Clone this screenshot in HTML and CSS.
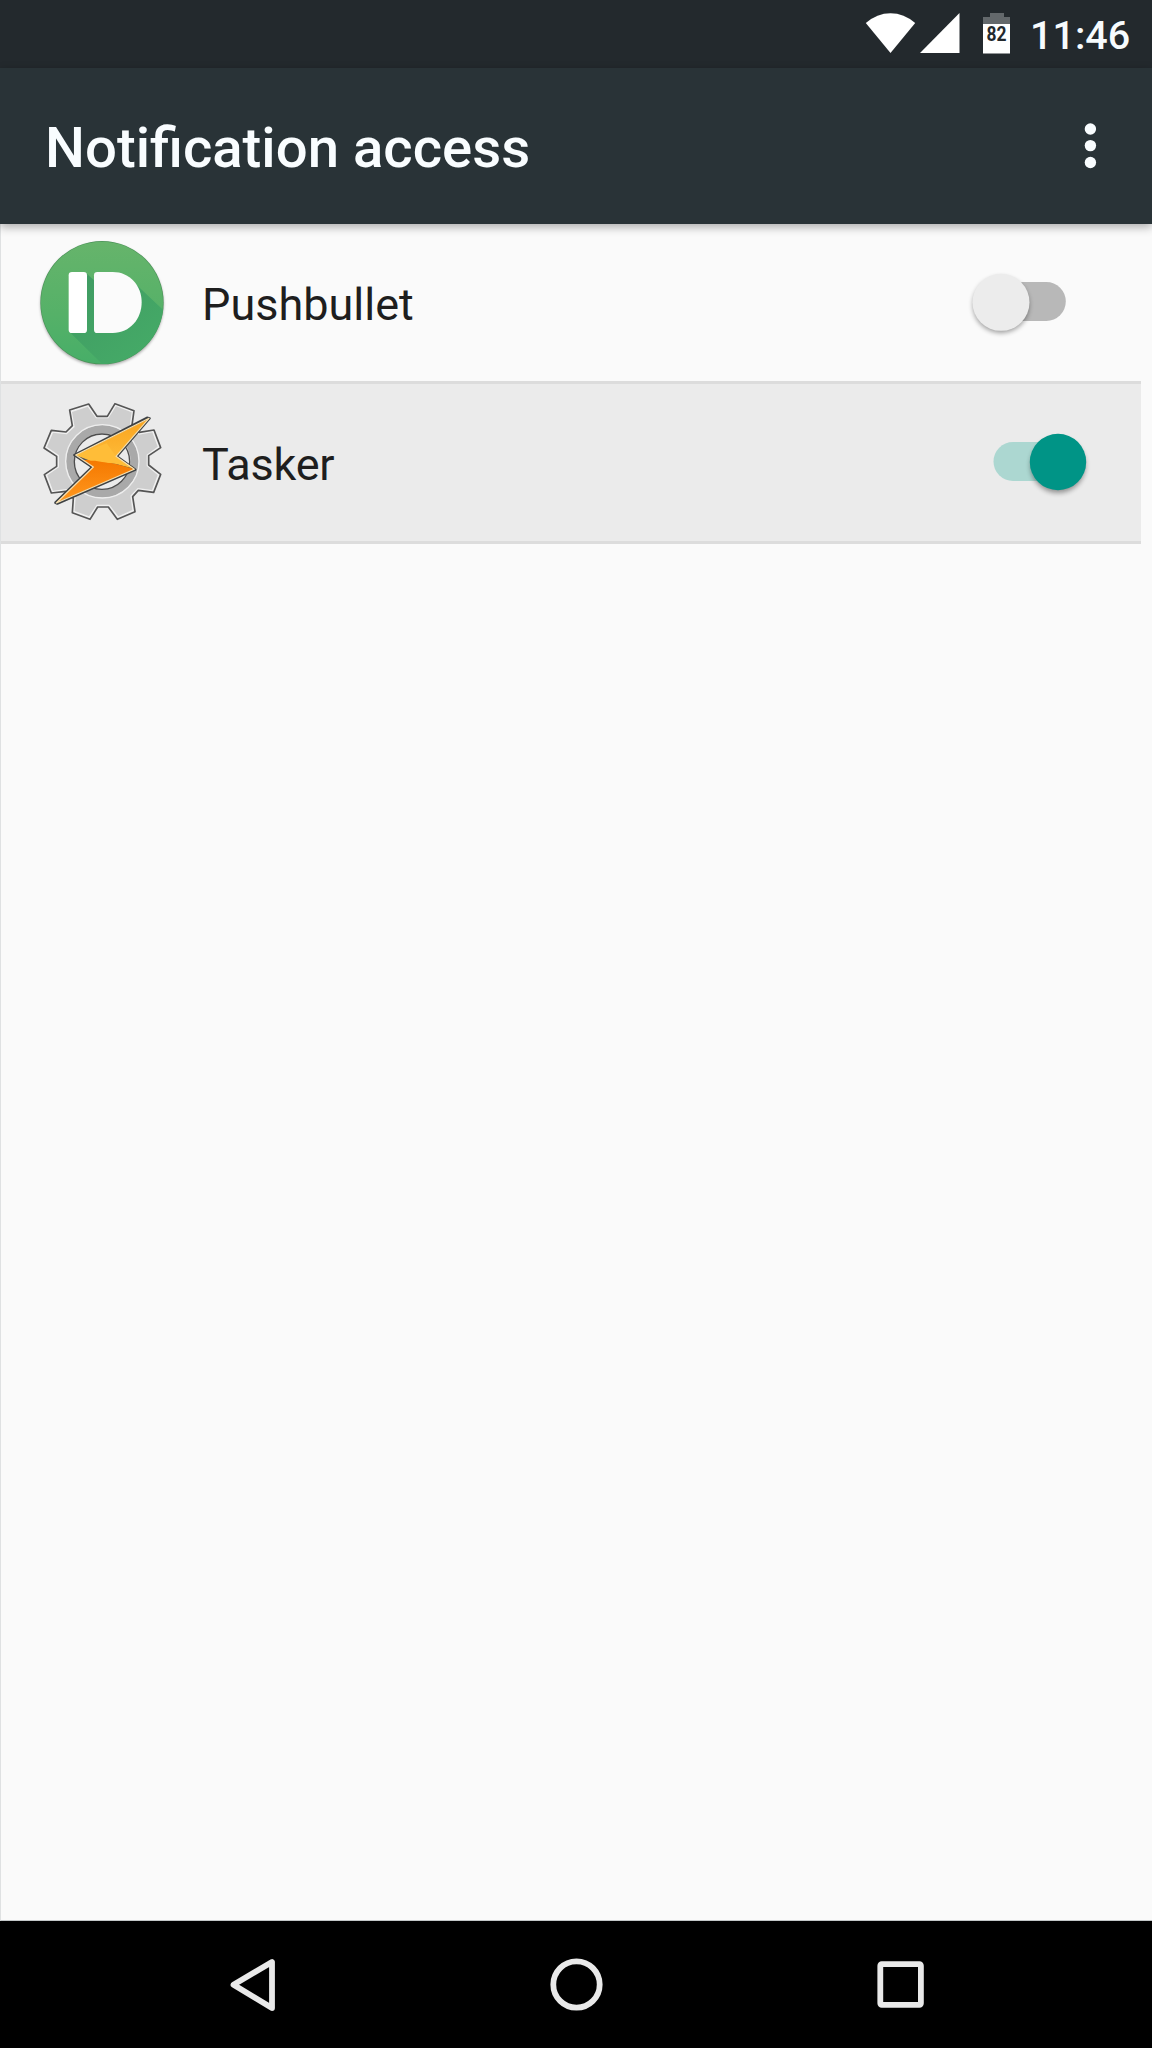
FILE: index.html
```html
<!DOCTYPE html>
<html lang="en">
<head>
  <meta charset="UTF-8" />
  <meta name="viewport" content="width=device-width, initial-scale=1.0"/>
  <title>Notification access</title>
  <link rel="stylesheet" href="styles.css">
</head>
<body>

<div class="status-bar">
  <svg class="status-icons" width="150" height="68" viewBox="0 0 150 68">
    <path fill="#fff" d="M25.500 53 L.8 23 Q12 13.200 25.500 13.200 T50.200 23 Z"/>
    <path fill="#fff" d="M55 53 H94.500 V13 Z"/>
    <path fill="#63686b" d="M118 24 V17 H125 V13 H139 V17 H145 V24 Z"/>
    <rect x="118" y="24" width="27" height="29.500" fill="#fff"/>
    <text class="battery-level" x="121.500" y="41" textLength="20" lengthAdjust="spacingAndGlyphs">82</text>
  </svg>
  <span class="clock">11:46</span>
</div>

<header>
  <div class="title">Notification access</div>
  <svg class="menu" width="24" height="48" viewBox="0 0 24 48">
    <circle cx="12.400" cy="7" r="5.700"/>
    <circle cx="12.400" cy="23.600" r="5.700"/>
    <circle cx="12.400" cy="40.500" r="5.700"/>
  </svg>
</header>

<main>
  <div class="row">
    <svg class="app-icon" width="160" height="157" viewBox="0 -3 480 471">
      <defs>
        <linearGradient id="green" x1="0" y1="0" x2="0" y2="1">
          <stop offset="0" stop-color="#66b46b"/>
          <stop offset=".6" stop-color="#55b168"/>
          <stop offset="1" stop-color="#47ae68"/>
        </linearGradient>
        <linearGradient id="long" x1="0" y1="0" x2=".8" y2="1">
          <stop offset="0" stop-color="#3f9a62"/>
          <stop offset="1" stop-color="#46ad68"/>
        </linearGradient>
        <clipPath id="disc"><circle cx="246" cy="233" r="184"/></clipPath>
        <filter id="soft" x="-20%" y="-20%" width="140%" height="140%">
          <feGaussianBlur stdDeviation="4"/>
        </filter>
      </defs>
      <circle cx="246" cy="238" r="184" fill="#000" opacity=".35" filter="url(#soft)"/>
      <circle cx="246" cy="233" r="185" fill="#4b9358"/>
      <circle cx="246" cy="233" r="183" fill="url(#green)"/>
      <g clip-path="url(#disc)">
        <path fill="url(#long)" d="M198 144 L222 166 L346 176 L450 274 L450 460 L290 460 L148 320 Z"/>
      </g>
      <rect x="146" y="141" width="55" height="183" rx="10" fill="#fff"/>
      <path fill="#fbfbfb" d="M232 141 H278 C330 141 365 182 365 232 S330 324 278 324 H232 Q222 324 222 314 V151 Q222 141 232 141 Z"/>
    </svg>
    <span class="app-name">Pushbullet</span>
    <svg class="switch" width="201" height="157" viewBox="0 0 201 157">
      <rect x="58" y="58" width="67.800" height="39" rx="19.500" fill="#b8b8b8"/>
      <circle class="shadow" cx="61" cy="81" r="28"/>
      <circle cx="61" cy="78.300" r="28.500" fill="#ececec"/>
    </svg>
  </div>

  <div class="row active">
    <svg class="app-icon" width="160" height="157" viewBox="0 27 480 471">
      <defs>
        <linearGradient id="boltTop" x1="0" y1="0" x2="0" y2="1">
          <stop offset="0" stop-color="#f9a31f"/>
          <stop offset="1" stop-color="#ffc03c"/>
        </linearGradient>
        <linearGradient id="boltBottom" x1="0" y1="0" x2="0" y2="1">
          <stop offset="0" stop-color="#f57900"/>
          <stop offset="1" stop-color="#ff981f"/>
        </linearGradient>
      </defs>
      <path class="gear" d="M149 105 L206 87 L231 124 H262 L285 86 L342 107 L336 150 L358 172 L402 165 L422 218 L386 242 V270 L422 298 L401 352 L355 346 L338 365 L345 410 L292 433 L265 396 H233 L210 433 L157 413 L160 370 L137 349 L94 354 L73 299 L110 274 V244 L72 219 L94 166 L138 171 L157 152 Z"/>
      <path class="gear-light" d="M156 111 L203 95 L228 130 H265 L288 94 L335 112 L329 153 L356 179 L397 172 L413 215 L380 239 V273 L413 300 L396 345 L353 339 L331 362 L337 405 L295 424 L268 389 H230 L207 424 L164 408 L167 367 L139 342 L99 347 L82 301 L117 277 V241 L81 216 L99 173 L140 178 L164 156 Z"/>
      <circle cx="247" cy="259" r="97" fill="none" stroke="#a9a9a9" stroke-width="24"/>
      <circle cx="247" cy="259" r="110" fill="none" stroke="#eee" stroke-width="4"/>
      <circle cx="246" cy="260" r="83" fill="#ebebeb" stroke="#4d4d4d" stroke-width="4"/>
      <path fill="#555" stroke="#3d4144" stroke-width="7" stroke-linejoin="round" d="M389 130 L291 244 L346 284 L112 386 L106 383 L216 276 L163 240 L381 128 Z"/>
      <path fill="url(#boltTop)" d="M386 131 L288 244 L343 281 L285 266 L220 258 L167 240 Z"/>
      <path fill="url(#boltBottom)" d="M217 254 L285 266 L343 283 L110 382 L220 276 L190 255 Z"/>
      <path fill="#ffbd38" d="M167 240 L260 205 L288 244 L320 267 L220 261 Z"/>
      <path fill="url(#boltBottom)" d="M194 257 L225 257 L285 268 L343 283 L110 382 L220 276 Z"/>
      <path fill="none" stroke="#f5dfb0" stroke-width="3.500" stroke-linejoin="round" d="M387 130 L288 244 L343 283 L109 384 L220 276 L167 240 Z"/>
    </svg>
    <span class="app-name tasker">Tasker</span>
    <svg class="switch" width="201" height="157" viewBox="0 0 201 157">
      <rect x="53.500" y="58" width="70" height="39" rx="19.500" fill="#acd7d1"/>
      <circle class="shadow" cx="118" cy="81.500" r="27.500"/>
      <circle cx="118" cy="78" r="28.200" fill="#009486"/>
    </svg>
  </div>
</main>

<nav>
  <svg width="324" height="127" viewBox="0 0 324 127">
    <path d="M143.500 63.800 L182 41 V87 Z"/>
  </svg>
  <svg width="324" height="127" viewBox="0 0 324 127">
    <circle cx="162.500" cy="63.500" r="23.200"/>
  </svg>
  <svg width="324" height="127" viewBox="0 0 324 127">
    <rect x="142.300" y="43.200" width="40.600" height="40.600" rx="1.500"/>
  </svg>
</nav>

</body>
</html>
```
FILE: styles.css
```css
* {
  box-sizing: border-box;
}
body {
  margin: 0;
  height: 2048px;
  display: flex;
  flex-direction: column;
  background: #fafafa;
  font-family: Roboto, "Liberation Sans", sans-serif;
  overflow: hidden;
}
svg {
  display: block;
  flex: none;
}
.status-bar {
  height: 68px;
  flex: none;
  display: flex;
  justify-content: flex-end;
  padding-right: 22px;
  background: #23292d;
}
.status-icons {
  margin-right: 15px;
}
.battery-level {
  font-size: 20px;
  font-weight: bold;
  fill: #23292d;
}
.clock {
  width: 100px;
  font-size: 39.5px;
  font-weight: 500;
  line-height: 71px;
  white-space: nowrap;
  text-align: right;
  color: #f7fbfd;
}
header {
  height: 156px;
  flex: none;
  display: flex;
  align-items: center;
  justify-content: space-between;
  padding: 0 50px 0 45px;
  background: #293337;
  box-shadow: 0 3px 9px rgba(0,0,0,0.32);
  z-index: 1;
}
.title {
  font-size: 56.3px;
  font-weight: 500;
  line-height: 66px;
  margin-top: 3px;
  color: #f9fdff;
}
.menu {
  fill: #f9fdff;
}
main {
  flex: 1;
  border-left: 1px solid #dfe1e2;
  border-bottom: 1px solid #c3c7c8;
}
.row {
  width: 1140px;
  height: 160px;
  display: flex;
  align-items: flex-start;
  padding-left: 19px;
  border-bottom: 3px solid #dcdcdc;
}
.row.active {
  background: #ebebeb;
}
.app-name {
  flex: 1;
  padding-left: 22px;
  font-size: 45px;
  line-height: 161px;
  height: 157px;
  color: #1e1e1e;
}
.app-name.tasker {
  letter-spacing: -0.2px;
}
.gear {
  fill: #f0f0f0;
  stroke: #555;
  stroke-width: 5;
  stroke-linejoin: round;
}
.gear-light {
  fill: #cecece;
}
.shadow {
  fill: #000;
  opacity: 0.38;
  filter: blur(2.5px);
}
nav {
  height: 127px;
  flex: none;
  display: flex;
  justify-content: center;
  background: #000;
}
nav svg {
  fill: none;
  stroke: #e9e9e9;
  stroke-width: 5.8;
  stroke-linejoin: round;
}
```
